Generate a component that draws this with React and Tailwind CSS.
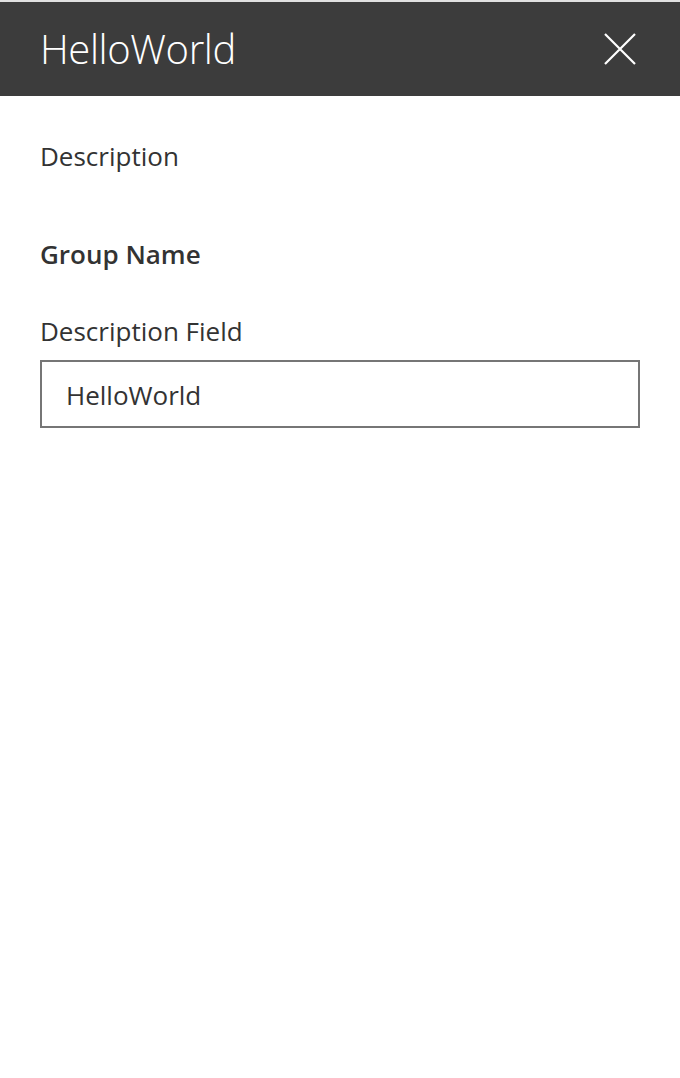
export default function App() {
  return (
    <div className="min-h-[1078px] bg-white font-['Open_Sans',sans-serif]">
      {/* top strip + header */}
      <div className="h-[2px] bg-[#e1e1e1]" />
      <div className="h-[94px] bg-[#3c3c3c] flex items-center justify-between pl-10 pr-[44px]">
        <h1 className="text-[40px] font-light text-white leading-none tracking-[-0.4px]">HelloWorld</h1>
        <button className="w-[32px] h-[32px] flex items-center justify-center">
          <svg width="32" height="32" viewBox="0 0 32 32" fill="none" stroke="white" strokeWidth="2.2">
            <path d="M1 1L31 31M31 1L1 31" />
          </svg>
        </button>
      </div>

      <div className="px-10 text-[#333333]">
        <p className="mt-[44px] text-[26px] leading-[32px]">Description</p>

        <h2 className="mt-[66px] text-[26px] font-semibold leading-[32px]">Group Name</h2>

        <label className="block mt-[45px] text-[26px] leading-[32px]">Description Field</label>
        <div className="mt-[13px] h-[68px] border-2 border-[#767676] flex items-center px-6 pt-[3px]">
          <span className="text-[26px] text-[#333333]">HelloWorld</span>
        </div>
      </div>
    </div>
  )
}
